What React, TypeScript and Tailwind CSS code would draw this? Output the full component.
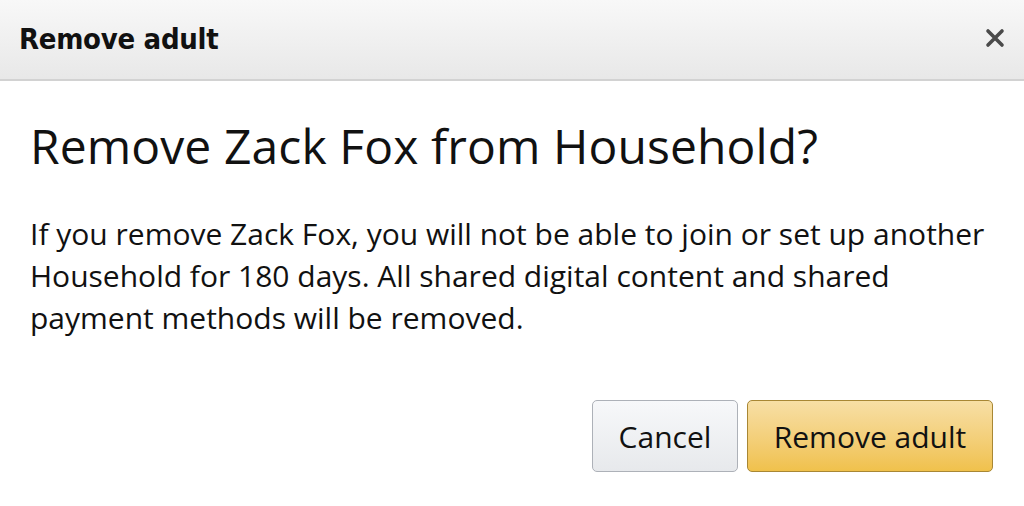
import React from 'react';

export default function App() {
  return (
    <div className="w-[1024px] h-[506px] bg-white overflow-hidden font-['Open_Sans',sans-serif] text-[#111]">
      {/* Header */}
      <div className="h-[81px] flex items-center justify-between pl-[19px] pr-[18px] bg-gradient-to-b from-[#f8f8f8] to-[#e8e8e8] border-b-2 border-[#d2d2d2]">
        <h2 className="font-['DejaVu_Sans_Condensed','DejaVu_Sans',sans-serif] font-bold text-[29px] tracking-[-0.3px] text-[#111]">Remove adult</h2>
        <button className="w-[22px] h-[22px] flex items-center justify-center -mt-[4px]" aria-label="Close">
          <svg width="20" height="20" viewBox="0 0 20 20">
            <path d="M3 3 L17 17 M17 3 L3 17" stroke="#4a4a4a" strokeWidth="3.6" strokeLinecap="round" />
          </svg>
        </button>
      </div>

      {/* Body */}
      <div className="px-[30px] pt-[37px]">
        <h1 className="text-[48px] leading-[56px] font-normal tracking-[0.1px] text-[#111]">Remove Zack Fox from Household?</h1>
        <p className="mt-[39px] text-[30px] leading-[42px] text-[#111] max-w-[970px]">
          If you remove Zack Fox, you will not be able to join or set up another Household for 180 days. All shared digital content and shared payment methods will be removed.
        </p>
        <div className="flex justify-end gap-[9px] mt-[61px] pr-[1px]">
          <button className="w-[146px] h-[72px] rounded-[5px] border border-[#adb1b8] bg-gradient-to-b from-[#f7f8fa] to-[#e7e9ec] text-[30px] text-[#111]">
            Cancel
          </button>
          <button className="w-[246px] h-[72px] rounded-[5px] border border-[#a88734] bg-gradient-to-b from-[#f7dfa5] to-[#f0c14b] text-[30px] text-[#111]">
            Remove adult
          </button>
        </div>
      </div>
    </div>
  );
}
